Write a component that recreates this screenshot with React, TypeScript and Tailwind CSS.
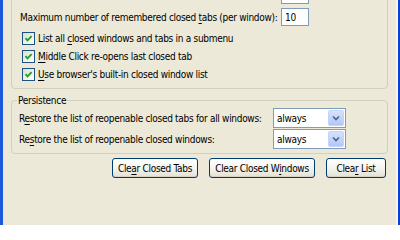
import React from "react";

const font = { fontFamily: '"DejaVu Sans Condensed", "Liberation Sans", Arial, sans-serif' };

const Mn = ({ children }: { children: React.ReactNode }) => (
  <span className="underline decoration-1 underline-offset-2">{children}</span>
);

const CheckBox = () => (
  <span className="flex items-center justify-center w-[13px] h-[13px] border border-[#1C5180] bg-gradient-to-br from-[#DCDCD7] to-white shrink-0">
    <svg width="9" height="9" viewBox="0 0 9 9">
      <path d="M1.5 4.2 L3.5 6.4 L7.6 2.2" fill="none" stroke="#21A121" strokeWidth="1.9" />
    </svg>
  </span>
);

const CheckRow = ({ children }: { children: React.ReactNode }) => (
  <div className="flex items-center h-[18px] gap-[3px] pl-[10px]">
    <CheckBox />
    <span>{children}</span>
  </div>
);

const Select = ({ value }: { value: string }) => (
  <div className="flex items-center w-[73px] h-[20px] border border-[#7F9DB9] bg-white">
    <span className="flex-1 pl-[3px]">{value}</span>
    <span className="flex items-center justify-center w-[16px] h-[16px] mr-[1px] rounded-[2px] bg-gradient-to-b from-[#D6E2FD] to-[#B2C8F8] border border-[#C3D3FD]">
      <svg width="8" height="6" viewBox="0 0 8 6">
        <path d="M1 1.5 L4 4.5 L7 1.5" fill="none" stroke="#4D6185" strokeWidth="1.6" />
      </svg>
    </span>
  </div>
);

const Button = ({ w, children }: { w: string; children: React.ReactNode }) => (
  <button
    className={`${w} h-[20px] border border-[#003C74] rounded-[3px] bg-gradient-to-b from-white via-[#F5F4EE] to-[#E3E1D5] text-black shadow-[inset_0_-1px_0_#D6D0C5] whitespace-nowrap`}
  >
    {children}
  </button>
);

export default function App() {
  return (
    <div
      className="w-[400px] h-[225px] overflow-hidden flex bg-[#0A3ED6] text-[10px] text-black leading-[13px] whitespace-nowrap tracking-[-0.3px]"
      style={font}
    >
      <div className="w-[3px] bg-[#1D57DB]" />
      <div className="flex-1 flex flex-col bg-[#ECE9D8] border-r-2 border-[#F7F6F1] px-[8px]">
        {/* Top group, cut off */}
        <div className="-mt-[20px] border border-[#D0D0BF] rounded-[4px] pt-[5px] pb-[5px] pl-[8px]">
          <div className="flex items-center h-[18px]">
            <span className="w-[261px]" />
            <div className="w-[28px] h-[18px] border border-[#7F9DB9] bg-white" />
          </div>
          <div className="flex items-center h-[18px] mt-[4px]">
            <span className="w-[261px]">
              Maximum number of remembered closed <Mn>t</Mn>abs (per window):
            </span>
            <div className="w-[28px] h-[18px] border border-[#7F9DB9] bg-white flex items-center pl-[3px]">
              10
            </div>
          </div>
          <div className="mt-[3px] -ml-[8px]">
            <CheckRow>
              List all <Mn>c</Mn>losed windows and tabs in a submenu
            </CheckRow>
            <CheckRow>
              <Mn>M</Mn>iddle Click re-opens last closed tab
            </CheckRow>
            <CheckRow>
              <Mn>U</Mn>se browser's built-in closed window list
            </CheckRow>
          </div>
        </div>

        {/* Persistence */}
        <fieldset className="mt-[5px] border border-[#D0D0BF] rounded-[4px] px-[7px] pb-[4px]">
          <legend className="px-[1px] -ml-[2px]">Persistence</legend>
          <div className="grid grid-cols-[254px_73px] gap-y-[1px] items-center pt-[1px]">
            <span>
              R<Mn>e</Mn>store the list of reopenable closed tabs for all windows:
            </span>
            <Select value="always" />
            <span>
              Re<Mn>s</Mn>tore the list of reopenable closed windows:
            </span>
            <Select value="always" />
          </div>
        </fieldset>

        <div className="flex justify-end gap-[11px] mt-[4px] pr-[2px]">
          <Button w="w-[86px]">
            Cle<Mn>a</Mn>r Closed Tabs
          </Button>
          <Button w="w-[106px]">
            Clear Closed W<Mn>i</Mn>ndows
          </Button>
          <Button w="w-[60px]">
            Clea<Mn>r</Mn> List
          </Button>
        </div>
      </div>
      <div className="w-[2px] bg-[#0A3ED6]" />
    </div>
  );
}
